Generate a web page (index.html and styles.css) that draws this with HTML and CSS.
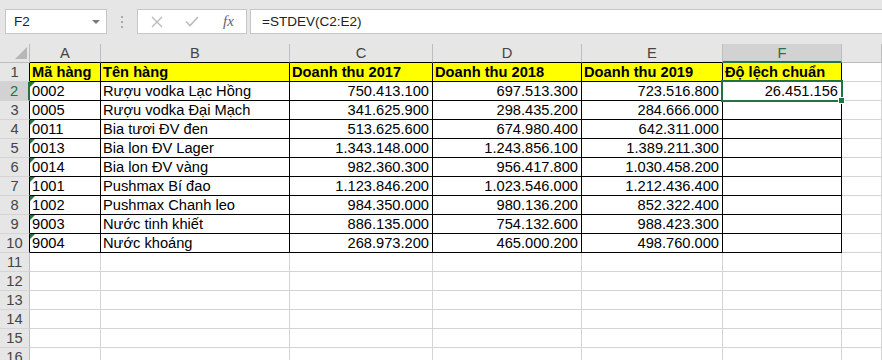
FILE: index.html
```html
<!DOCTYPE html>
<html lang="vi">
<head>
  <meta charset="UTF-8">
  <title>STDEV</title>
  <link rel="stylesheet" href="styles.css">
</head>
<body>
  <div class="toolbar">
    <div class="namebox">
      <span>F2</span>
      <span class="caret"></span>
    </div>
    <div class="grip"><i></i><i></i><i></i></div>
    <div class="fx-buttons">
      <svg width="12" height="12" viewBox="0 0 12 12"><path d="M1 1 L11 11 M11 1 L1 11" stroke="#bcbcbc" stroke-width="1.4" fill="none"/></svg>
      <svg width="14" height="11" viewBox="0 0 14 11"><path d="M1 5.5 L5 9.5 L13 1" stroke="#bcbcbc" stroke-width="1.6" fill="none"/></svg>
      <span class="fx">fx</span>
    </div>
    <div class="formula">=STDEV(C2:E2)</div>
  </div>

  <div class="sheet">
    <div class="row head">
      <div class="corner"><svg width="12" height="12" viewBox="0 0 12 12"><polygon points="12,0 12,12 0,12" fill="#b7b7b7"/></svg></div>
      <div class="col t">A</div>
      <div class="col t">B</div>
      <div class="col t">C</div>
      <div class="col t">D</div>
      <div class="col t">E</div>
      <div class="col sel">F</div>
      <div class="col"></div>
    </div>

    <div class="row">
      <div class="num t">1</div>
      <div class="c t y b">Mã hàng</div>
      <div class="c t y b">Tên hàng</div>
      <div class="c t y b">Doanh thu 2017</div>
      <div class="c t y b">Doanh thu 2018</div>
      <div class="c t y b">Doanh thu 2019</div>
      <div class="c t y b">Độ lệch chuẩn</div>
      <div class="c"></div>
    </div>
    <div class="row">
      <div class="num t on">2</div>
      <div class="c t tri">0002</div>
      <div class="c t">Rượu vodka Lạc Hồng</div>
      <div class="c t r">750.413.100</div>
      <div class="c t r">697.513.300</div>
      <div class="c t r">723.516.800</div>
      <div class="c t r active">26.451.156</div>
      <div class="c"></div>
    </div>
    <div class="row">
      <div class="num t">3</div>
      <div class="c t">0005</div>
      <div class="c t">Rượu vodka Đại Mạch</div>
      <div class="c t r">341.625.900</div>
      <div class="c t r">298.435.200</div>
      <div class="c t r">284.666.000</div>
      <div class="c t"></div>
      <div class="c"></div>
    </div>
    <div class="row">
      <div class="num t">4</div>
      <div class="c t tri">0011</div>
      <div class="c t">Bia tươi ĐV đen</div>
      <div class="c t r">513.625.600</div>
      <div class="c t r">674.980.400</div>
      <div class="c t r">642.311.000</div>
      <div class="c t"></div>
      <div class="c"></div>
    </div>
    <div class="row">
      <div class="num t">5</div>
      <div class="c t tri">0013</div>
      <div class="c t">Bia lon ĐV Lager</div>
      <div class="c t r">1.343.148.000</div>
      <div class="c t r">1.243.856.100</div>
      <div class="c t r">1.389.211.300</div>
      <div class="c t"></div>
      <div class="c"></div>
    </div>
    <div class="row">
      <div class="num t">6</div>
      <div class="c t tri">0014</div>
      <div class="c t">Bia lon ĐV vàng</div>
      <div class="c t r">982.360.300</div>
      <div class="c t r">956.417.800</div>
      <div class="c t r">1.030.458.200</div>
      <div class="c t"></div>
      <div class="c"></div>
    </div>
    <div class="row">
      <div class="num t">7</div>
      <div class="c t tri">1001</div>
      <div class="c t">Pushmax Bí đao</div>
      <div class="c t r">1.123.846.200</div>
      <div class="c t r">1.023.546.000</div>
      <div class="c t r">1.212.436.400</div>
      <div class="c t"></div>
      <div class="c"></div>
    </div>
    <div class="row">
      <div class="num t">8</div>
      <div class="c t tri">1002</div>
      <div class="c t">Pushmax Chanh leo</div>
      <div class="c t r">984.350.000</div>
      <div class="c t r">980.136.200</div>
      <div class="c t r">852.322.400</div>
      <div class="c t"></div>
      <div class="c"></div>
    </div>
    <div class="row">
      <div class="num t">9</div>
      <div class="c t tri">9003</div>
      <div class="c t">Nước tinh khiết</div>
      <div class="c t r">886.135.000</div>
      <div class="c t r">754.132.600</div>
      <div class="c t r">988.423.300</div>
      <div class="c t"></div>
      <div class="c"></div>
    </div>
    <div class="row">
      <div class="num t">10</div>
      <div class="c t tri">9004</div>
      <div class="c t">Nước khoáng</div>
      <div class="c t r">268.973.200</div>
      <div class="c t r">465.000.200</div>
      <div class="c t r">498.760.000</div>
      <div class="c t"></div>
      <div class="c"></div>
    </div>

    <div class="row"><div class="num">11</div><div class="c"></div><div class="c"></div><div class="c"></div><div class="c"></div><div class="c"></div><div class="c"></div><div class="c"></div></div>
    <div class="row"><div class="num">12</div><div class="c"></div><div class="c"></div><div class="c"></div><div class="c"></div><div class="c"></div><div class="c"></div><div class="c"></div></div>
    <div class="row"><div class="num">13</div><div class="c"></div><div class="c"></div><div class="c"></div><div class="c"></div><div class="c"></div><div class="c"></div><div class="c"></div></div>
    <div class="row"><div class="num">14</div><div class="c"></div><div class="c"></div><div class="c"></div><div class="c"></div><div class="c"></div><div class="c"></div><div class="c"></div></div>
    <div class="row"><div class="num">15</div><div class="c"></div><div class="c"></div><div class="c"></div><div class="c"></div><div class="c"></div><div class="c"></div><div class="c"></div></div>
    <div class="row"><div class="num">16</div><div class="c"></div><div class="c"></div><div class="c"></div><div class="c"></div><div class="c"></div><div class="c"></div><div class="c"></div></div>
  </div>
</body>
</html>
```

FILE: styles.css
```css
html, body {
  margin: 0;
  padding: 0;
  height: 100%;
  overflow: hidden;
  background-color: #fff;
  font-family: "Liberation Sans", Arial, sans-serif;
}

/* formula bar */
.toolbar {
  display: flex;
  align-items: flex-start;
  height: 44px;
  box-sizing: border-box;
  padding: 9px 0 0 5px;
  background-color: #e6e6e6;
}

.namebox {
  display: flex;
  align-items: center;
  justify-content: space-between;
  width: 102px;
  height: 25px;
  box-sizing: border-box;
  padding: 0 6px 0 8px;
  background-color: #fff;
  border: 1px solid #c6c6c6;
  font-size: 13.5px;
  color: #222;
}

.caret {
  width: 0;
  height: 0;
  border-left: 4px solid transparent;
  border-right: 4px solid transparent;
  border-top: 4px solid #7a7a7a;
}

.grip {
  display: flex;
  flex-direction: column;
  align-items: center;
  gap: 3px;
  width: 30px;
  padding-top: 7px;
}

.grip i {
  width: 2px;
  height: 2px;
  background-color: #aaa;
}

.fx-buttons {
  display: flex;
  align-items: center;
  gap: 22px;
  width: 110px;
  height: 25px;
  box-sizing: border-box;
  padding-left: 13px;
  margin-right: 3px;
  background-color: #fff;
  border: 1px solid #c6c6c6;
}

.fx {
  margin-left: 2px;
  font-family: "Liberation Serif", serif;
  font-style: italic;
  font-size: 15px;
  color: #666;
}

.formula {
  flex: 1;
  height: 25px;
  box-sizing: border-box;
  padding-left: 11px;
  line-height: 23px;
  background-color: #fff;
  border: 1px solid #c6c6c6;
  border-right: none;
  font-size: 13.5px;
  color: #222;
}

/* grid */
.row {
  display: grid;
  grid-template-columns: 30px 71px 189px 143px 149px 141px 119px 1fr;
}

.row > div {
  box-sizing: border-box;
  height: 19px;
  padding-top: 1px;
  border-right: 1px solid #d4d4d4;
  border-bottom: 1px solid #d4d4d4;
  font-size: 14.67px;
  line-height: 17px;
  white-space: nowrap;
  overflow: hidden;
}

.head > div {
  padding-top: 0;
  line-height: 18px;
  background-color: #e6e6e6;
  border-right-color: #bdbdbd;
  border-bottom-color: #bdbdbd;
  text-align: center;
  color: #444;
}

.head .t {
  border-bottom-color: #000;
}

.head .sel {
  background-color: #d2d2d2;
  border-bottom: 2px solid #217346;
  color: #217346;
}

.corner {
  display: flex;
  align-items: flex-end;
  justify-content: flex-end;
  padding: 0 2px 3px 0;
}

.num {
  background-color: #e6e6e6;
  text-align: center;
  color: #444;
  border-right-color: #bdbdbd !important;
  border-bottom-color: #d4d4d4;
}

.num.t {
  border-right-color: #000 !important;
}

.num.on {
  background-color: #d2d2d2;
  border-right: 2px solid #217346 !important;
  color: #217346;
}

.c {
  padding: 1px 3px 0 2px;
  color: #000;
}

.c.t {
  border-right-color: #000;
  border-bottom-color: #000;
}

.y {
  background-color: #ffff00;
}

.b {
  font-weight: bold;
}

.r {
  text-align: right;
}

.tri {
  position: relative;
}

.tri::before {
  content: "";
  position: absolute;
  top: 0;
  left: 0;
  border-top: 5px solid #1f7a3a;
  border-right: 5px solid transparent;
}

.row > .active {
  position: relative;
  overflow: visible;
}

.active::after {
  content: "";
  position: absolute;
  top: -2px;
  left: -2px;
  right: -2px;
  bottom: -2px;
  border: 2px solid #217346;
}

.active::before {
  content: "";
  position: absolute;
  right: -4px;
  bottom: -4px;
  width: 5px;
  height: 5px;
  background-color: #217346;
  border: 1px solid #fff;
  z-index: 1;
}
```
